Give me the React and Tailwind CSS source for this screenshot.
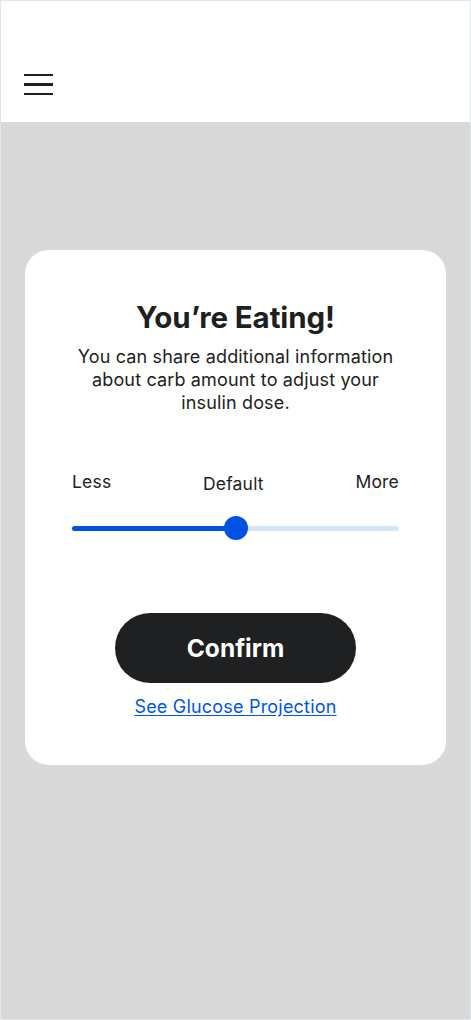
import React, { useState } from 'react';

const FONT = { fontFamily: '"Inter", "Noto Sans", "Liberation Sans", sans-serif' };

function App() {
    const [value] = useState(50);

    return (
        <div className="w-[471px] h-[1020px] flex flex-col border border-[#e2e5ea] bg-[#d9d9d9]" style={FONT}>
            {/* Header */}
            <div className="h-[121px] shrink-0 bg-white flex items-end pb-[27px] pl-[23px]">
                <button className="flex flex-col gap-[7px] w-[29px]" aria-label="Menu">
                    <span className="block h-[2.5px] w-full bg-[#1f1f1f]" />
                    <span className="block h-[2.5px] w-full bg-[#1f1f1f]" />
                    <span className="block h-[2.5px] w-full bg-[#1f1f1f]" />
                </button>
            </div>

            {/* Card */}
            <div className="px-[24px] pt-[128px]">
                <div className="bg-white rounded-[24px] h-[515px] flex flex-col items-center pt-[49px] px-[40px]">
                    <h1 className="text-[29.5px] font-bold text-[#1f1f1f] leading-[36px] tracking-[-0.1px]">You’re Eating!</h1>
                    <p className="mt-[10px] text-[18px] leading-[23px] text-[#222] text-center tracking-[0.15px]">
                        You can share additional information about carb amount to adjust your insulin dose.
                    </p>

                    {/* Slider */}
                    <div className="w-full mt-[56px] px-[7px]">
                        <div className="flex justify-between items-start text-[17.5px] text-[#222] leading-[24px] tracking-[0.2px]">
                            <span>Less</span>
                            <span className="mt-[2px]">Default</span>
                            <span>More</span>
                        </div>
                        <div className="relative h-[24px] mt-[20px] flex items-center">
                            <div className="h-[5px] w-full rounded-full bg-[#d5e3fb]">
                                <div className="h-full rounded-full bg-[#0052e0]" style={{ width: `${value}%` }} />
                            </div>
                            <div
                                className="absolute top-0 w-[24px] h-[24px] rounded-full bg-[#0052e0] -translate-x-1/2"
                                style={{ left: `${value}%` }}
                            />
                        </div>
                    </div>

                    <button className="mt-[73px] w-[241px] h-[70px] rounded-full bg-[#1f2022] text-white text-[24.5px] font-bold">
                        Confirm
                    </button>
                    <a href="#" className="mt-[12px] text-[18px] leading-[24px] text-[#0055e6] underline underline-offset-2 tracking-[0.2px]">
                        See Glucose Projection
                    </a>
                </div>
            </div>
        </div>
    );
}

export default App;
